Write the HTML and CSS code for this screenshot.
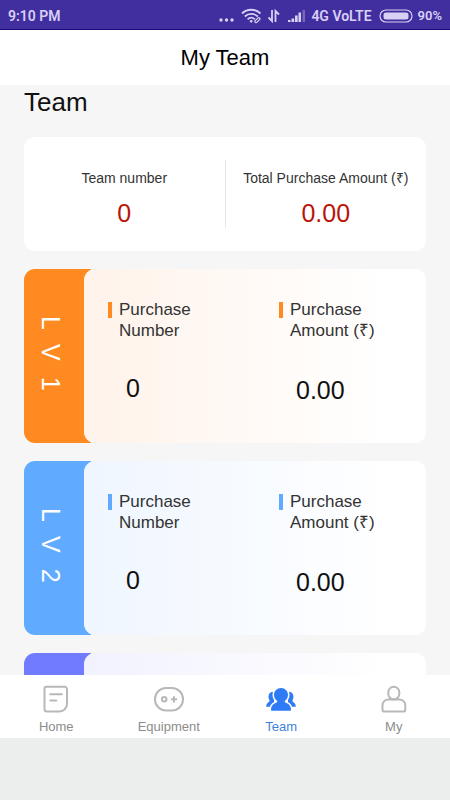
FILE: index.html
```html
<!DOCTYPE html>
<html lang="en">
<head>
<meta charset="utf-8">
<meta name="viewport" content="width=device-width, initial-scale=1">
<title>My Team</title>
<link rel="stylesheet" href="styles.css">
</head>
<body>
<div class="status">
  <span class="clock">9:10 PM</span>
  <svg class="dots" width="16" height="16" viewBox="0 0 16 16" fill="currentColor"><circle cx="3" cy="12" r="1.7"/><circle cx="8.5" cy="12" r="1.7"/><circle cx="14" cy="12" r="1.7"/></svg>
  <svg class="wifi" width="22" height="16" viewBox="0 0 22 16" fill="none" stroke="currentColor" stroke-width="1.8"><path d="M1 5.500C6 .5 14.500 .5 19.500 5.500M3.800 8.500c3.700-3.400 9.300-3.400 13 0M6.600 11.300c2.200-2 5-2 7.200 0"/><circle cx="10.200" cy="13.300" r="1.300" fill="currentColor" stroke="none"/><path stroke-width="1.200" d="M14.300 12.600l2.500-2.500c1.200-1.200 3 .4 1.800 1.600l-2.500 2.500c-1.200 1.200-3-.4-1.800-1.600z"/></svg>
  <svg class="data" width="14" height="16" viewBox="0 0 14 16" fill="none" stroke="currentColor" stroke-width="1.8"><path d="M5 2v11L1.500 9.500M8.500 14V3L12 6.500"/></svg>
  <svg class="signal" width="19" height="16" viewBox="0 0 19 16" fill="currentColor"><path d="M1 12h2.500v2H1zM4.500 10.500h2.700V14H4.500zM8 7.500h2.700V14H8zM11.500 4.500H14V14h-2.500z"/><path opacity=".35" d="M15.500 2h2.500v12h-2.500z"/></svg>
  <span>4G VoLTE</span>
  <svg class="battery" width="34" height="14" viewBox="0 0 34 14"><rect x="1" y="1" width="32" height="12" rx="6" fill="none" stroke="currentColor" stroke-width="1.2"/><rect x="4.500" y="3.500" width="25" height="7" rx="2.500" fill="currentColor"/></svg>
  <span class="percent">90%</span>
</div>

<header class="topbar"><h1>My Team</h1></header>

<main class="content">
  <h2>Team</h2>
  <section class="summary">
    <div class="total"><span class="total-label">Team number</span><span class="total-value">0</span></div>
    <div class="total"><span class="total-label">Total Purchase Amount (₹)</span><span class="total-value">0.00</span></div>
  </section>

  <section class="level orange">
    <h3 class="tab">LV1</h3>
    <div class="panel">
      <div class="stat count"><p class="label">Purchase Number</p><p class="value">0</p></div>
      <div class="stat amount"><p class="label">Purchase Amount (₹)</p><p class="value">0.00</p></div>
    </div>
  </section>

  <section class="level blue">
    <h3 class="tab">LV2</h3>
    <div class="panel">
      <div class="stat count"><p class="label">Purchase Number</p><p class="value">0</p></div>
      <div class="stat amount"><p class="label">Purchase Amount (₹)</p><p class="value">0.00</p></div>
    </div>
  </section>

  <section class="level violet">
    <h3 class="tab"></h3>
    <div class="panel"></div>
  </section>
</main>

<nav class="nav">
  <a href="#home"><svg width="30" height="30" viewBox="0 0 30 30" fill="none" stroke="currentColor" stroke-width="2" stroke-linejoin="round" stroke-linecap="round"><path d="M5 2.800h18.500a2.500 2.500 0 0 1 2.500 2.500V20a7.500 7.500 0 0 1-7.500 7.500H6a2.500 2.500 0 0 1-2.500-2.500V4.300a1.500 1.500 0 0 1 1.500-1.500z"/><path d="M9.300 10.300h11.500M9.300 16.500h6"/></svg><span>Home</span></a>
  <a href="#equipment"><svg width="30" height="30" viewBox="0 0 30 30" fill="none" stroke="currentColor" stroke-width="2"><rect x="1" y="4" width="28" height="22.500" rx="11"/><circle cx="10.200" cy="15.300" r="2.300"/><path d="M20 12.200v6.200M17 15.300h6"/></svg><span>Equipment</span></a>
  <a href="#team" class="active" aria-current="page"><svg width="30" height="30" viewBox="0 0 30 30" fill="currentColor"><path d="M8 7.700C3.500 7 1 11.500 3.500 16.200 4.200 18.200.2 18.200.2 22.700H8zM22 7.700c4.500-.7 7 3.800 4.500 8.500-.7 2 3.300 2 3.300 6.500H22z"/><path stroke="#fff" stroke-width="3" paint-order="stroke" d="M15 4c-4 0-7 3-7 6.800 0 2.700 1.200 4.700 3.200 6.200.3 1-.5 1.500-2.200 2.300-2.500 1.200-4 3-4 6.400 0 .7.300 1 1 1h18c.7 0 1-.3 1-1 0-3.400-1.500-5.200-4-6.400-1.700-.8-2.500-1.300-2.200-2.300 2-1.500 3.200-3.500 3.200-6.200C22 7 19 4 15 4z"/></svg><span>Team</span></a>
  <a href="#my"><svg width="30" height="30" viewBox="0 0 30 30" fill="none" stroke="currentColor" stroke-width="2"><rect x="9.300" y="2.800" width="11" height="12.600" rx="5.500"/><path d="M9.500 15.400h10.800a6 6 0 0 1 6 6v4a2.200 2.200 0 0 1-2.200 2.200H5.700a2.200 2.200 0 0 1-2.200-2.200v-4a6 6 0 0 1 6-6z"/></svg><span>My</span></a>
</nav>
<div class="system-area"></div>
</body>
</html>
```
FILE: styles.css
```css
* { box-sizing: border-box; }
h1, h2, h3, p { margin: 0; font-weight: 400; }

body {
  margin: 0;
  height: 100vh;
  display: flex;
  flex-direction: column;
  background: #f6f6f6;
  color: #111;
  font-family: "Liberation Sans", Arial, sans-serif;
}

.status {
  flex: none;
  height: 30px;
  padding: 2px 8px 0;
  display: flex;
  align-items: center;
  background: #412f9f;
  border-bottom: 1px solid #170a78;
  color: #d9d0f5;
  font: 600 14px/20px Roboto, sans-serif;
}
.status svg { flex: none; }
.clock { margin-right: auto; }
.dots { margin-right: 7px; }
.wifi { margin-right: 4px; }
.data { margin-right: 6px; }
.signal { margin-right: 5px; }
.battery { margin: 0 5px 0 7px; }
.percent { font-size: 13px; }

.topbar {
  flex: none;
  height: 55px;
  display: flex;
  align-items: center;
  justify-content: center;
  background: #fff;
}
.topbar h1 { font-size: 22px; line-height: 28px; color: #000; }

.content {
  flex: 1;
  min-height: 0;
  overflow: hidden;
  padding: 0 24px;
}
.content h2 { font-size: 26px; line-height: 34px; margin-bottom: 18px; }

.summary {
  display: flex;
  padding: 23px 0;
  margin-bottom: 18px;
  background: #fff;
  border-radius: 11px;
}
.total {
  flex: 1;
  display: flex;
  flex-direction: column;
  align-items: center;
  gap: 8px;
  height: 68px;
  padding-top: 8px;
}
.total + .total { border-left: 1px solid #e8e8e8; }
.total-label { font-size: 14px; line-height: 20px; white-space: nowrap; color: #333; }
.total-value { font-size: 25px; line-height: 34px; color: #b91508; }

.level {
  display: flex;
  height: 174px;
  margin-bottom: 18px;
  border-radius: 11px;
  background: linear-gradient(to right, var(--accent) 67px, transparent 67px);
}
.orange { --accent: #ff8a22; --tint: #fff3ea; }
.blue { --accent: #60abff; --tint: #eff6ff; }
.violet { --accent: #717bff; --tint: #f2f2ff; }

.tab {
  flex: none;
  width: 60px;
  padding: 10px 8px 0 0;
  display: flex;
  align-items: center;
  justify-content: center;
  writing-mode: vertical-rl;
  color: #fff;
  font-size: 25px;
  letter-spacing: 16px;
}
.panel {
  flex: 1;
  display: flex;
  padding-top: 30px;
  border-radius: 11px;
  background: linear-gradient(to right, var(--tint), #fff 90%);
}
.stat { flex: 1; padding-left: 24px; }
.label {
  width: 108px;
  padding-left: 11px;
  font-size: 17px;
  line-height: 21px;
  color: #333;
  background: linear-gradient(var(--accent), var(--accent)) 0 3px / 4px 16px no-repeat;
}
.value {
  margin-top: 30px;
  padding-left: 17px;
  font-size: 25px;
  line-height: 34px;
}
.count .value { padding-left: 18px; }
.amount .value { margin-top: 32px; }

.nav {
  flex: none;
  display: flex;
  height: 63px;
  background: #fff;
}
.nav a {
  flex: 1;
  display: flex;
  flex-direction: column;
  align-items: center;
  gap: 3px;
  padding-top: 9px;
  color: #b8b8b8;
  text-decoration: none;
}
.nav span { color: #8c8c8c; font-size: 13px; line-height: 20px; }
.nav .active { color: #2f7bf6; }
.nav .active span { color: #3f7fdc; }

.system-area { flex: none; height: 62px; background: #eceeed; }
```
